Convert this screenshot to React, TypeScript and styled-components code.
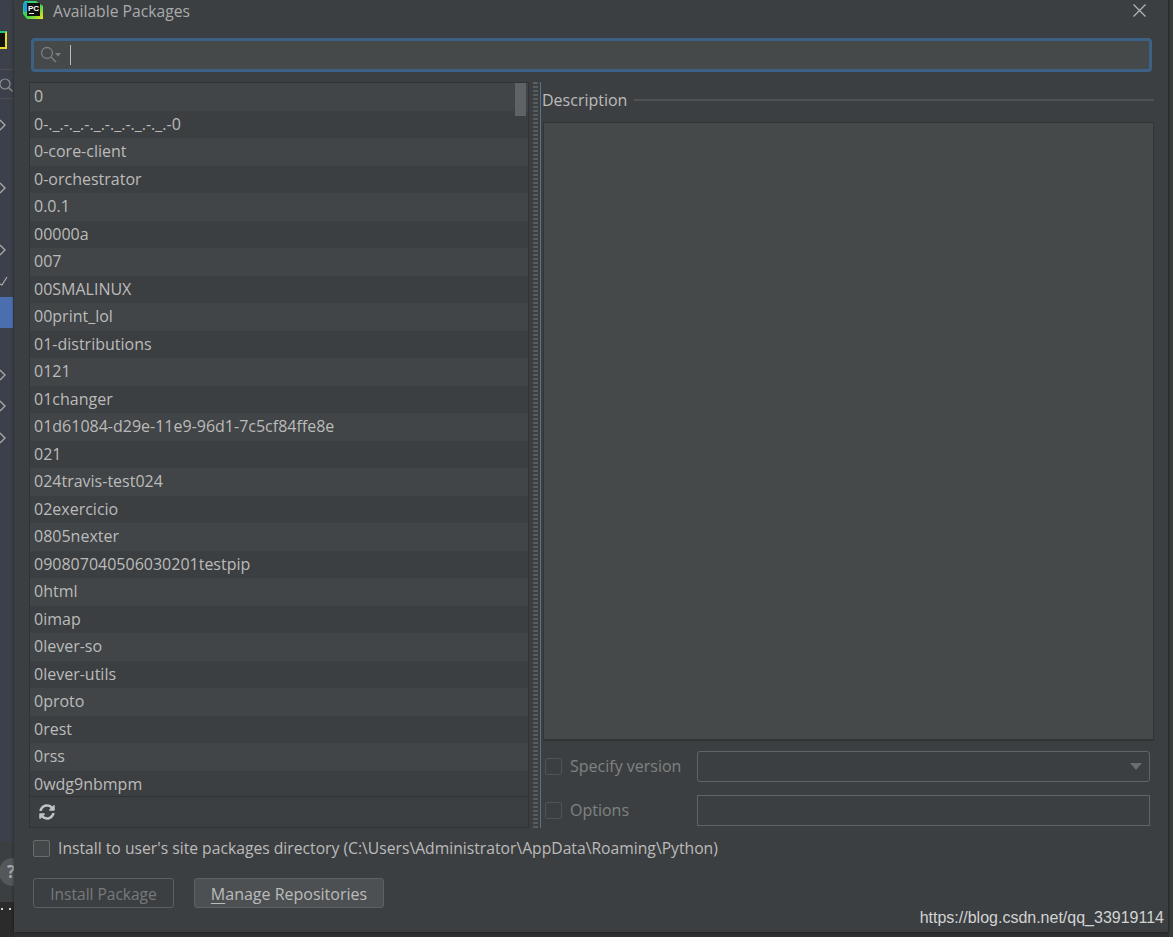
import React from "react"
import styled, { createGlobalStyle } from "styled-components"
import { FaSyncAlt } from "react-icons/fa"

const packages = [
    "0", "0-._.-._.-._.-._.-._.-._.-0", "0-core-client", "0-orchestrator", "0.0.1", "00000a", "007",
    "00SMALINUX", "00print_lol", "01-distributions", "0121", "01changer",
    "01d61084-d29e-11e9-96d1-7c5cf84ffe8e", "021", "024travis-test024", "02exercicio", "0805nexter",
    "090807040506030201testpip", "0html", "0imap", "0lever-so", "0lever-utils", "0proto", "0rest", "0rss",
    "0wdg9nbmpm",
]

const GlobalStyle = createGlobalStyle`
    html, body {
        margin: 0;
        padding: 0;
        background: #2f3133;
        overflow: hidden;
    }
    * {
        box-sizing: border-box;
    }
`

const Page = styled.div`
    position: relative;
    display: flex;
    width: 1173px;
    height: 937px;
    overflow: hidden;
    font-family: "Open Sans", "Noto Sans", sans-serif;
    font-size: 16px;
    color: #bbbbbb;
`

const LeftStrip = styled.div`
    display: flex;
    flex-direction: column;
    align-items: flex-start;
    width: 14px;
    height: 937px;
    background: #3c404a;
    flex: none;
`

const StripLogo = styled.div`
    width: 7px;
    height: 18px;
    margin-top: 31px;
    background: #111;
    border: solid #e8d92a;
    border-width: 0 2px 2px 0;
    border-top: 2px solid #21c47a;
`

const StripSearch = styled.div`
    width: 14px;
    height: 30px;
    margin-top: 20px;
    padding-top: 7px;
    border-top: 1px solid #4b4e50;
    border-bottom: 1px solid #4b4e50;
`

const StripArrow = styled.div<{ $gap: number }>`
    width: 14px;
    height: 14px;
    margin-top: ${(p) => p.$gap}px;
`

const StripSelected = styled.div`
    width: 13px;
    height: 31px;
    margin-top: 14px;
    background: #4b6eaf;
`

const StripSpacer = styled.div`
    flex: 1;
`

const StripFooter = styled.div`
    width: 14px;
    height: 60px;
    background: #3c3f41;
`

const StripConsole = styled.div`
    display: flex;
    align-items: flex-start;
    gap: 6px;
    width: 14px;
    height: 35px;
    padding: 6px 0 0 1px;
    background: #2b2b2b;
`

const StripDot = styled.i`
    width: 2px;
    height: 2px;
    background: #d0d0d0;
`

const HelpBadge = styled.div`
    position: absolute;
    left: -1px;
    top: 858px;
    width: 28px;
    height: 28px;
    padding-left: 8px;
    border-radius: 50%;
    background: #55585a;
    color: #a5a7a8;
    font-size: 17px;
    font-weight: 700;
    line-height: 28px;
    overflow: hidden;
`

const Dialog = styled.div`
    display: flex;
    flex-direction: column;
    flex: none;
    width: 1154px;
    height: 932px;
    background: #3c3f41;
    box-shadow: 0 0 3px rgba(0, 0, 0, 0.5);
    z-index: 1;
`

const TitleBar = styled.div`
    display: flex;
    align-items: center;
    height: 20px;
    padding: 0 22px 0 9px;
`

const TitleText = styled.div`
    margin-left: 9px;
    padding-top: 2px;
    color: #a9abad;
    font-size: 15.7px;
    flex: 1;
`

const SearchField = styled.div`
    display: flex;
    align-items: center;
    width: 1121px;
    height: 34px;
    margin: 18px 0 0 17px;
    padding-left: 6px;
    background: #45494a;
    border: 3px solid #3d6185;
    border-radius: 4px;
`

const Caret = styled.div`
    width: 1px;
    height: 20px;
    margin-left: 8px;
    background: #bbbbbb;
`

const Split = styled.div`
    display: flex;
    height: 746px;
    margin: 10px 0 0 15px;
`

const ListPane = styled.div`
    position: relative;
    display: flex;
    flex-direction: column;
    width: 500px;
    border: 1px solid #323232;
`

const Rows = styled.div`
    height: 713px;
    flex: none;
    overflow: hidden;
`

const Row = styled.div<{ $odd: boolean }>`
    height: 27.5px;
    padding-left: 4px;
    background: ${(p) => (p.$odd ? "#3c3f41" : "#414547")};
    line-height: 27.5px;
    white-space: nowrap;
`

const Thumb = styled.div`
    position: absolute;
    top: 0;
    right: 2px;
    width: 11px;
    height: 33px;
    background: #5f6365;
`

const ListToolbar = styled.div`
    display: flex;
    align-items: center;
    height: 31px;
    padding-left: 9px;
    border-top: 1px solid #323232;
    color: #c0c2c3;
    font-size: 16px;
`

const Grip = styled.div`
    width: 5px;
    margin-left: 4px;
    background: repeating-linear-gradient(to bottom, #5b5e60 0 2px, #3c3f41 2px 4px);
`

const SplitLine = styled.div`
    width: 1px;
    margin-left: 2px;
    background: #5f7187;
`

const DetailPane = styled.div`
    display: flex;
    flex-direction: column;
    width: 612px;
    margin-left: 1px;
`

const SectionHead = styled.div`
    display: flex;
    align-items: center;
    flex: none;
    height: 40px;
    padding-bottom: 4px;
    gap: 7px;
`

const SectionLine = styled.div`
    flex: 1;
    height: 2px;
    background: #505355;
`

const DescriptionBox = styled.div`
    flex: none;
    width: 611px;
    height: 619px;
    margin-left: 1px;
    background: #45494a;
    border: 1px solid #323435;
    border-bottom-width: 2px;
`

const OptionList = styled.div`
    display: flex;
    flex-direction: column;
    gap: 13px;
    margin-top: 10px;
`

const OptionRow = styled.div`
    display: flex;
    align-items: center;
    height: 31px;
    padding-left: 3px;
`

const Check = styled.div<{ $on?: boolean }>`
    width: 17px;
    height: 17px;
    flex: none;
    background: ${(p) => (p.$on ? "#43494a" : "transparent")};
    border: 1px solid ${(p) => (p.$on ? "#6b6b6b" : "#505355")};
    border-radius: 2px;
`

const OptionLabel = styled.div`
    width: 127px;
    margin-left: 8px;
    padding-bottom: 2px;
    color: #7f8283;
`

const Combo = styled.div`
    display: flex;
    align-items: center;
    justify-content: flex-end;
    width: 453px;
    height: 31px;
    padding-right: 7px;
    border: 1px solid #616365;
    border-radius: 3px;
`

const ComboArrow = styled.div`
    width: 0;
    height: 0;
    border-left: 6px solid transparent;
    border-right: 6px solid transparent;
    border-top: 7px solid #6b6e70;
`

const TextInput = styled.div`
    width: 453px;
    height: 31px;
    border: 1px solid #616365;
`

const InstallRow = styled.div`
    display: flex;
    align-items: center;
    gap: 8px;
    height: 17px;
    margin: 12px 0 0 19px;
    font-size: 15.7px;
    line-height: 19px;
`

const Buttons = styled.div`
    display: flex;
    gap: 20px;
    margin: 21px 0 0 19px;
`

const Button = styled.div<{ $width: number; $disabled?: boolean }>`
    width: ${(p) => p.$width}px;
    height: 30px;
    background: ${(p) => (p.$disabled ? "transparent" : "#4c5052")};
    border: 1px solid ${(p) => (p.$disabled ? "#5e6060" : "#5e6162")};
    border-radius: 3px;
    color: ${(p) => (p.$disabled ? "#777a7c" : "#bbbbbb")};
    font-size: ${(p) => (p.$disabled ? 15.5 : 16)}px;
    line-height: 31px;
    text-align: center;
`

const Mnemonic = styled.span`
    text-decoration: underline;
    text-underline-offset: 3px;
`

const RightStrip = styled.div`
    flex: none;
    width: 5px;
    height: 937px;
    background: #3a3d3f;
    border-left: 1px solid #323232;
`

const Watermark = styled.div`
    position: absolute;
    right: 9px;
    top: 908px;
    z-index: 2;
    font-family: "Liberation Sans", Arial, sans-serif;
    font-size: 16px;
    line-height: 19px;
    color: #d2d3d3;
`

const PyCharmLogo = () => (
    <svg width="21" height="20" viewBox="0 0 21 20">
        <defs>
            <linearGradient id="pc" x1="0" y1="0" x2="1" y2="1">
                <stop offset="0" stopColor="#20d68a" />
                <stop offset="0.55" stopColor="#3fd44a" />
                <stop offset="1" stopColor="#f2e61c" />
            </linearGradient>
        </defs>
        <path d="M2 1h11l7 5v13H4L0 14V4z" fill="url(#pc)" />
        <path d="M0 4l5-3v10L1 12z" fill="#1d9fd8" />
        <rect x="4" y="3" width="13" height="13" fill="#111" />
        <rect x="6" y="13" width="5" height="1" fill="#eee" />
        <text x="5" y="10.5" fill="#fff" fontSize="8" fontWeight="700" fontFamily="Liberation Sans, sans-serif">
            PC
        </text>
    </svg>
)

const SearchIcon = () => (
    <svg width="22" height="18" viewBox="0 0 22 18" fill="none">
        <circle cx="7" cy="7" r="5.5" stroke="#7c7f81" strokeWidth="1.3" />
        <path d="M11 11l5 5" stroke="#7c7f81" strokeWidth="1.5" />
        <path d="M15 7h6l-3 3.5z" fill="#7c7f81" />
    </svg>
)

const CloseIcon = () => (
    <svg width="13" height="13" viewBox="0 0 13 13" fill="none">
        <path d="M.5.5l12 12M12.5.5l-12 12" stroke="#b4b6b7" strokeWidth="1.2" />
    </svg>
)

const Chevron = () => (
    <svg width="6" height="12" viewBox="0 0 6 12" fill="none">
        <path d="M0 1l5 5-5 5" stroke="#a9abad" strokeWidth="1.3" />
    </svg>
)

const Tick = () => (
    <svg width="8" height="10" viewBox="0 0 8 10" fill="none">
        <path d="M0 8l2 1 5-8" stroke="#a9abad" strokeWidth="1.2" />
    </svg>
)

const StripGlass = () => (
    <svg width="13" height="16" viewBox="0 0 13 16" fill="none">
        <circle cx="5" cy="6" r="5" stroke="#8a8d8f" strokeWidth="1.2" />
        <path d="M8.5 9.5l4 4" stroke="#8a8d8f" strokeWidth="1.4" />
    </svg>
)

export default function App() {
    return (
        <Page>
            <GlobalStyle />
            <LeftStrip>
                <StripLogo />
                <StripSearch>
                    <StripGlass />
                </StripSearch>
                <StripArrow $gap={15}>
                    <Chevron />
                </StripArrow>
                <StripArrow $gap={49}>
                    <Chevron />
                </StripArrow>
                <StripArrow $gap={48}>
                    <Chevron />
                </StripArrow>
                <StripArrow $gap={16}>
                    <Tick />
                </StripArrow>
                <StripSelected />
                <StripArrow $gap={36}>
                    <Chevron />
                </StripArrow>
                <StripArrow $gap={17}>
                    <Chevron />
                </StripArrow>
                <StripArrow $gap={18}>
                    <Chevron />
                </StripArrow>
                <StripSpacer />
                <StripFooter />
                <StripConsole>
                    <StripDot />
                    <StripDot />
                </StripConsole>
            </LeftStrip>
            <HelpBadge>?</HelpBadge>
            <Dialog>
                <TitleBar>
                    <PyCharmLogo />
                    <TitleText>Available Packages</TitleText>
                    <CloseIcon />
                </TitleBar>
                <SearchField>
                    <SearchIcon />
                    <Caret />
                </SearchField>
                <Split>
                    <ListPane>
                        <Rows>
                            {packages.map((name, i) => (
                                <Row key={name} $odd={i % 2 === 1}>
                                    {name}
                                </Row>
                            ))}
                        </Rows>
                        <Thumb />
                        <ListToolbar>
                            <FaSyncAlt />
                        </ListToolbar>
                    </ListPane>
                    <Grip />
                    <SplitLine />
                    <DetailPane>
                        <SectionHead>
                            Description
                            <SectionLine />
                        </SectionHead>
                        <DescriptionBox />
                        <OptionList>
                            <OptionRow>
                                <Check />
                                <OptionLabel>Specify version</OptionLabel>
                                <Combo>
                                    <ComboArrow />
                                </Combo>
                            </OptionRow>
                            <OptionRow>
                                <Check />
                                <OptionLabel>Options</OptionLabel>
                                <TextInput />
                            </OptionRow>
                        </OptionList>
                    </DetailPane>
                </Split>
                <InstallRow>
                    <Check $on />
                    Install to user's site packages directory (C:\Users\Administrator\AppData\Roaming\Python)
                </InstallRow>
                <Buttons>
                    <Button $width={141} $disabled>
                        Install Package
                    </Button>
                    <Button $width={190}>
                        <Mnemonic>M</Mnemonic>anage Repositories
                    </Button>
                </Buttons>
            </Dialog>
            <RightStrip />
            <Watermark>https://blog.csdn.net/qq_33919114</Watermark>
        </Page>
    )
}
